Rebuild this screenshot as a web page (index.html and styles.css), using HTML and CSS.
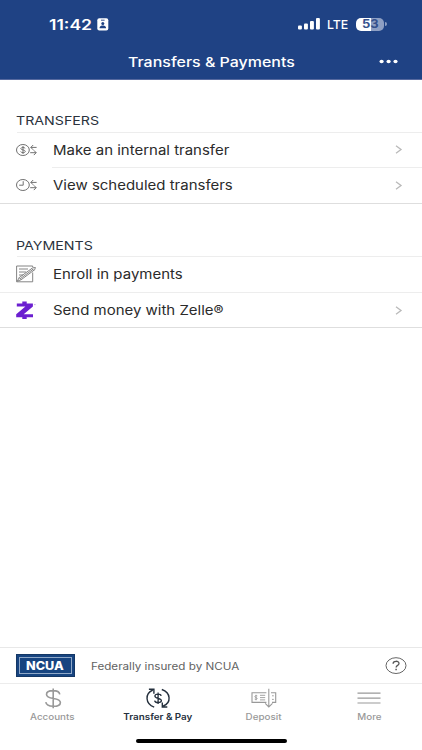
FILE: index.html
```html
<!DOCTYPE html>
<html lang="en">
<head>
<meta charset="utf-8">
<title>Transfers &amp; Payments</title>
<link rel="stylesheet" href="styles.css">
</head>
<body>
<div class="app">
  <header class="header">
    <div class="status">
      <span class="time"><span class="wide">11:42</span></span>
      <svg class="badge" viewBox="0 0 12 13"><rect x=".3" y=".3" width="11" height="12.2" rx="2" fill="#fff"/><path d="M4 2.2h3.6" stroke="#1f4284" stroke-width=".9"/><circle cx="5.8" cy="5.4" r="1.5" fill="#1f4284"/><path d="M2.6 10.2V9.4C3 8 4.4 7.5 5.8 7.5S8.6 8 9 9.4v.8z" fill="#1f4284"/></svg>
      <svg class="signal" viewBox="0 0 23 12" fill="#fff"><rect x="0" y="7.4" width="3.9" height="4" rx="1"/><rect x="6" y="5.4" width="3.9" height="6" rx="1"/><rect x="12" y="2.9" width="3.9" height="8.5" rx="1"/><rect x="18" y="0" width="3.9" height="11.4" rx="1"/></svg>
      <span class="lte"><span class="wide">LTE</span></span>
      <span class="battery"><span class="wide">53</span></span>
      <span class="battery-cap"></span>
    </div>
    <div class="titlebar">
      <h1 class="title"><span class="wide">Transfers &amp; Payments</span></h1>
      <svg class="dots" viewBox="0 0 20 4" fill="#fff"><ellipse cx="2.6" cy="1.5" rx="2.1" ry="1.7"/><ellipse cx="9.6" cy="1.5" rx="2.1" ry="1.7"/><ellipse cx="16.5" cy="1.5" rx="2.1" ry="1.7"/></svg>
    </div>
  </header>

  <main class="content">
    <section class="group group-transfers">
      <h2 class="label"><span class="wide">TRANSFERS</span></h2>
      <div class="row">
        <svg class="icon" viewBox="0 0 24 20" fill="none" stroke="#707070" stroke-width="1"><ellipse cx="6.9" cy="10" rx="6.4" ry="5.5"/><path d="M9.2 8.3C8.8 7.4 5 7 4.8 8.6c0 1.6 4.5 1 4.5 2.8 0 1.7-4 1.6-4.7.2M7 6v8"/><path d="M20.6 7.4h-5.8M17.2 5 14.8 7.4l2.4 2.4M14.2 12.7h6M17.8 10.3l2.4 2.4-2.4 2.4"/></svg>
        <span class="text make"><span class="wide">Make an internal transfer</span></span>
        <svg class="chevron" viewBox="0 0 7 9"><path d="M1 .8 6 4.5 1 8.2" fill="none" stroke="#b9b9b9" stroke-width="1.3"/></svg>
      </div>
      <div class="row inset">
        <svg class="icon" viewBox="0 0 24 20" fill="none" stroke="#707070" stroke-width="1"><ellipse cx="6.9" cy="10" rx="6.4" ry="5.5"/><path d="M7.2 6.2V10.2H3.2"/><path d="M20.6 7.4h-5.8M17.2 5 14.8 7.4l2.4 2.4M14.2 12.7h6M17.8 10.3l2.4 2.4-2.4 2.4"/></svg>
        <span class="text view"><span class="wide">View scheduled transfers</span></span>
        <svg class="chevron" viewBox="0 0 7 9"><path d="M1 .8 6 4.5 1 8.2" fill="none" stroke="#b9b9b9" stroke-width="1.3"/></svg>
      </div>
    </section>

    <section class="group group-payments">
      <h2 class="label"><span class="wide">PAYMENTS</span></h2>
      <div class="row">
        <svg class="icon" viewBox="0 0 24 20" fill="none" stroke="#777" stroke-width=".9"><path d="M16.7 3V2H.6v15.8h16.1V8.5"/><path d="M3 5h9M3 8h7M3 11h4"/><path d="M1.3 17.2 3.2 13.6 16.7 3.8 19.4 3.5 18.7 5.7 5.2 15.7zM3.2 13.6l2 2.1M15.8 4.5l2 2M4.3 14.7 17.2 5.2"/></svg>
        <span class="text enroll"><span class="wide">Enroll in payments</span></span>
      </div>
      <div class="row full">
        <svg class="icon" viewBox="0 0 24 20"><path fill="#6b1fd0" d="M.8 3.4H6.3V1.6h4.4v1.8h6.2v3.1L7.7 14.2h9.3v3.1h-6.3v1.8H6.3v-1.8H.2v-3L9.4 6.6H.8z"/><path d="M18 4.6h1.6" stroke="#b49bd8" stroke-width=".7"/></svg>
        <span class="text send"><span class="wide">Send money with Zelle®</span></span>
        <svg class="chevron" viewBox="0 0 7 9"><path d="M1 .8 6 4.5 1 8.2" fill="none" stroke="#b9b9b9" stroke-width="1.3"/></svg>
      </div>
    </section>
  </main>

  <div class="insured">
    <div class="ncua"><div class="ncua-frame"><span class="wide">NCUA</span></div></div>
    <span class="insured-text"><span class="wide">Federally insured by NCUA</span></span>
    <svg class="help" viewBox="0 0 22 18" fill="none" stroke="#555"><ellipse cx="11" cy="8.6" rx="10" ry="7.9" stroke-width=".9"/><path d="M8.1 6.7C8 3.6 14 3.4 14 6.5c0 2-2.9 1.8-2.9 4.1" stroke-width="1.3"/><path d="M11.1 11.8v1.5" stroke-width="1.5"/></svg>
  </div>

  <nav class="tabs">
    <div class="tab accounts">
      <svg viewBox="0 0 26 22" fill="none" stroke="#999" stroke-width="1.6"><path d="M19.8 6.3C19.4 3.9 16.6 2.6 13 2.6c-3.8 0-6.5 1.5-6.5 3.8 0 5.6 13.9 2.5 13.9 8 0 2.5-3.1 3.9-7.2 3.9-4.3 0-7-1.6-7.4-4.1M13.2.5v19.7"/></svg>
      <span class="wide">Accounts</span>
    </div>
    <div class="tab active">
      <svg viewBox="0 0 26 22" fill="none" stroke="#25303d" stroke-width="1.4"><path d="M9.2 19.1C.2 16-.4 5.7 7.8 2M3.9 1.3h5v4.5M16.8 1.5C26 4.5 26.5 15 18.2 18M22.3 19h-5v-4.6"/><path stroke-width="1.3" d="M16.2 7.9C15.7 5.5 10 5.3 9.9 8c0 3 6.5 1.6 6.5 4.6 0 2.8-6.3 2.8-6.8.1M13.1 4.5v11.6"/></svg>
      <span class="wide">Transfer &amp; Pay</span>
    </div>
    <div class="tab deposit">
      <svg viewBox="0 0 26 22" fill="none" stroke="#999" stroke-width="1.1"><path d="M15.4 14.4H1V4.8h14.4M20 4.8h4.7v9.6H21M17.8.8v18M14.2 15.4l3.6 3.5 3.7-3.5"/><path d="M9 7.3h5.2M9 9.6h5.2M9 11.9h5.2M21 7.8h1.8M21 11.4h1.8M6.3 7.9c-3-1-3 1.5-1.2 1.8 2 .3 1 2.4-1.4 1.4M5 6.8v5.5" stroke-width=".9"/></svg>
      <span class="wide">Deposit</span>
    </div>
    <div class="tab more">
      <svg viewBox="0 0 26 22" fill="none" stroke="#999" stroke-width="1.2"><path d="M1.5 5.2h23M1.5 10.2h23M1.5 15h23"/></svg>
      <span class="wide">More</span>
    </div>
  </nav>
  <div class="home"><div class="home-bar"></div></div>
</div>
</body>
</html>
```
FILE: styles.css
```css
* { box-sizing: border-box; }
body { margin: 0; background: #fff; font-family: Inter, "Liberation Sans", sans-serif; color: #2b2b2b; }
svg { display: block; flex: none; overflow: visible; }
h1, h2 { margin: 0; font-weight: 400; }
.app { width: 422px; height: 750px; display: flex; flex-direction: column; overflow: hidden; }

/* Extended letterforms */
.wide { display: inline-block; white-space: nowrap; transform: translateY(var(--dy, 0)) scaleX(var(--w, 1.18)); transform-origin: left center; }

.header { height: 80px; flex: none; background: #1f4284; border-bottom: 1px solid #56699f; color: #fff; }
.status { height: 45px; display: flex; align-items: center; padding: 3px 0 0 49px; }
.time { --w: 1.21; width: 48px; font-size: 14.5px; font-weight: 600; }
.badge { width: 12px; height: 13px; }
.signal { width: 23px; height: 12px; margin-left: 188.5px; }
.lte { --w: 1; width: 29px; margin-left: 6.5px; font-size: 12.3px; font-weight: 500; }
.battery { --w: 1.13; width: 28px; height: 13px; border-radius: 5px; background: linear-gradient(90deg, #fff 53%, #8e9fc3 53%); color: #35518d; font-size: 11.5px; font-weight: 700; line-height: 13px; padding-left: 6px; }
.battery-cap { width: 1.5px; height: 4px; margin-left: 1px; border-radius: 0 2px 2px 0; background: #8e9fc3; }
.titlebar { height: 34px; display: flex; align-items: center; padding-left: 128px; }
.title { --w: 1.228; width: 251px; font-size: 13px; font-weight: 500; }
.dots { width: 20px; height: 4px; }

.content { flex: 1; }
.group { border-bottom: 1px solid #dedede; }
.group-transfers { height: 124px; }
.group-payments { height: 124px; }
.label { --w: 1.155; --dy: .4px; height: 52px; padding: 33px 0 0 16px; font-size: 12.3px; line-height: 15px; color: #2b333d; }
.group-payments .label { --dy: 0; padding-top: 34px; }
.row { --w: 1.152; --dy: .4px; position: relative; height: 36px; display: flex; align-items: center; padding: 0 20px 0 16px; }
.group-transfers .row { height: 35.4px; }
.row::before { content: ""; position: absolute; top: 0; right: 0; left: 17px; height: 1px; background: #ededed; }
.row.inset::before { left: 52px; }
.row.full::before { left: 0; }
.icon { width: 24px; height: 20px; }
.text { flex: 1; margin-left: 12.6px; font-size: 13px; }
.chevron { width: 7px; height: 9px; }

.insured { height: 36px; flex: none; display: flex; align-items: center; border-top: 1px solid #e8e8e8; padding: 0 16px; }
.ncua { --w: 1.13; width: 59px; height: 23px; padding: 2px; background: #174480; border: 1px solid #143765; }
.ncua-frame { height: 17px; border: 1px solid #8fa8c8; color: #fff; font-size: 11.2px; font-weight: 800; line-height: 17px; padding-left: 6px; }
.insured-text { --w: 1.165; flex: 1; margin-left: 15.5px; font-size: 10px; color: #626262; }
.help { width: 22px; height: 18px; margin-right: -1px; }

.tabs { --w: 1.155; --dy: .5px; height: 47px; flex: none; display: grid; grid-template-columns: repeat(4, 1fr); border-top: 1px solid #ececec; }
.tab { display: flex; flex-direction: column; align-items: center; padding-top: 4px; color: #999; font-size: 8.5px; line-height: 11px; font-weight: 500; }
.tab svg { width: 26px; height: 22px; margin-bottom: 1px; }
.tab .wide { transform-origin: center; }
.active { color: #25303d; font-weight: 600; }
.home { height: 20px; flex: none; display: flex; justify-content: center; padding-top: 9px; }
.home-bar { width: 151px; height: 4px; border-radius: 2px; background: #000; }
```
